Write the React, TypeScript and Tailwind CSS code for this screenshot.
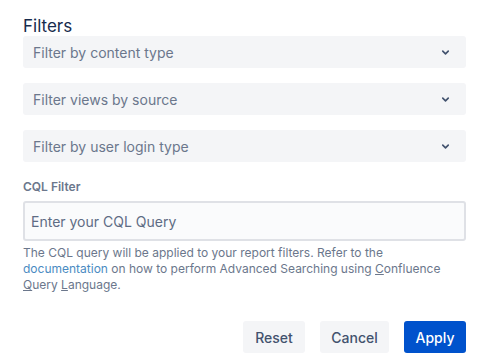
import { ChevronDown } from 'lucide-react'

const filters = ['Filter by content type', 'Filter views by source', 'Filter by user login type']

function FilterSelect({ label }: { label: string }) {
    return (
        <div className="flex h-8 items-center justify-between rounded-[3px] bg-[#F4F5F7] pl-[10px] pr-[15px]">
            <span className="text-[14px] text-[#6B778C]">{label}</span>
            <ChevronDown className="h-[11px] w-[11px] text-[#42526E]" strokeWidth={3.5} />
        </div>
    )
}

export default function App() {
    return (
        <div className="w-[489px] bg-white px-[23px] pt-[16px] font-['Inter',sans-serif]">
            <h2 className="text-[17px] leading-[20px] text-[#172B4D]">Filters</h2>
            <div className="flex flex-col gap-[15px]">
                {filters.map(f => <FilterSelect key={f} label={f} />)}
            </div>

            <div className="mt-[17px] text-[12px] font-semibold leading-[16px] text-[#6B778C]">CQL Filter</div>
            <input
                className="mt-[6px] h-10 w-full rounded-[3px] border-2 border-[#DFE1E6] bg-[#FAFBFC] px-[6px] text-[14px] text-[#172B4D] placeholder:text-[#5E6C84] outline-none"
                placeholder="Enter your CQL Query"
            />
            <p className="mt-[4px] text-[12px] leading-[16px] text-[#6B778C]">
                The CQL query will be applied to your report filters. Refer to the{' '}
                <a className="text-[#4A8BC2]" href="#">documentation</a> on how to perform Advanced Searching using{' '}
                <span className="underline">C</span>onfluence <span className="underline">Q</span>uery{' '}
                <span className="underline">L</span>anguage.
            </p>

            <div className="mt-[28px] flex justify-end gap-[15px] pb-4">
                <button className="h-8 w-[62px] rounded-[3px] bg-[#F4F5F7] text-[14px] font-medium text-[#42526E]">Reset</button>
                <button className="h-8 w-[69px] rounded-[3px] bg-[#F4F5F7] text-[14px] font-medium text-[#42526E]">Cancel</button>
                <button className="h-8 w-[62px] rounded-[3px] bg-[#0052CC] text-[14px] font-medium text-white">Apply</button>
            </div>
        </div>
    )
}
